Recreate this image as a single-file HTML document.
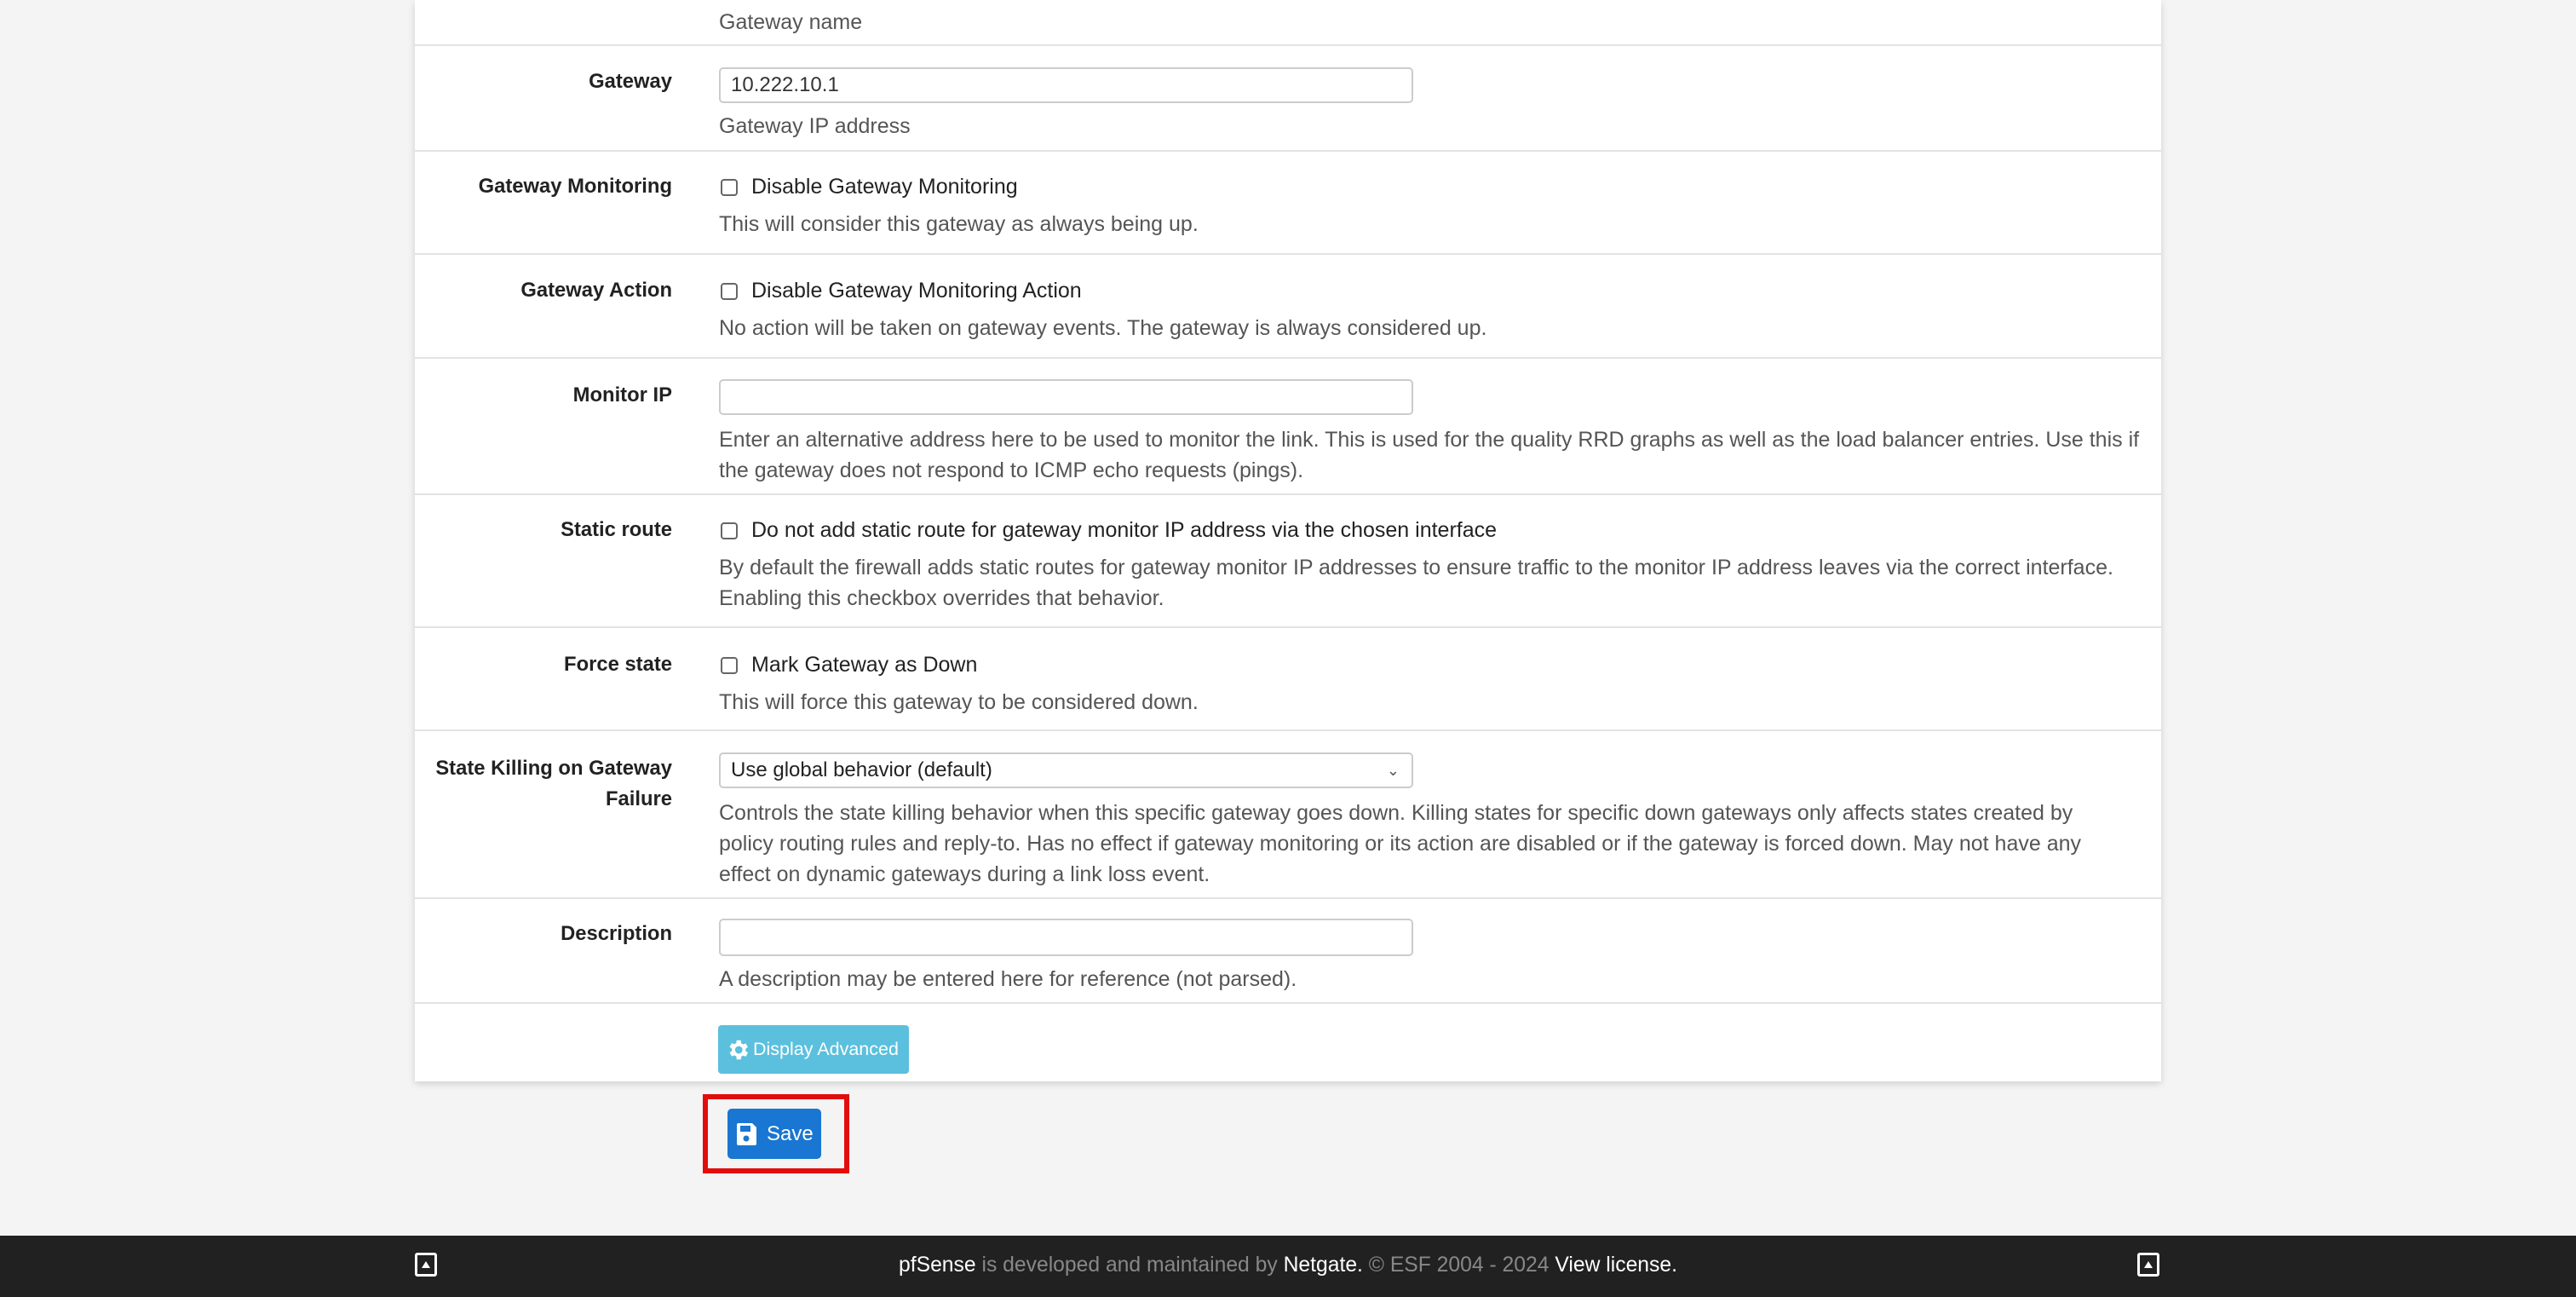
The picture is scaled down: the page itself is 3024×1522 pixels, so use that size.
<!DOCTYPE html>
<html><head><meta charset="utf-8"><style>
*{box-sizing:border-box;margin:0;padding:0}
body{width:3024px;height:1522px;background:#f4f4f4;font-family:"Liberation Sans",sans-serif;position:relative;overflow:hidden;color:#222}
.panel{position:absolute;left:487px;top:0;width:2050px;height:1269px;background:#fff;box-shadow:0 3px 8px rgba(0,0,0,.15)}
.hr{position:absolute;left:487px;width:2050px;height:2px;background:#e3e3e3}
.lbl{position:absolute;right:2235px;font-weight:bold;font-size:23.8px;line-height:36px;text-align:right;white-space:nowrap;color:#222}
.t{position:absolute;left:844px;font-size:25px;line-height:36px;white-space:nowrap;color:#555}
.c{position:absolute;left:846px;width:20px;height:20px;border:2px solid #666;border-radius:4px;background:#fff}
.ct{position:absolute;left:882px;font-size:25px;line-height:36px;white-space:nowrap;color:#222}
.in{position:absolute;left:844px;width:815px;border:2px solid #ccc;border-radius:5px;background:#fff;font-size:24px;padding-left:12px;display:flex;align-items:center;color:#333}
.foot{position:absolute;left:0;top:1450px;width:3024px;height:72px;background:#212121}
.ic{position:absolute;top:1470px;width:26px;height:28px;border:3px solid #fff;border-radius:3px}
.ic:after{content:"";position:absolute;left:5px;top:7px;border-left:5px solid transparent;border-right:5px solid transparent;border-bottom:8px solid #fff}
</style></head><body>
<div class="panel"></div>
<div class="hr" style="top:52px"></div>
<div class="hr" style="top:176px"></div>
<div class="hr" style="top:297px"></div>
<div class="hr" style="top:419px"></div>
<div class="hr" style="top:579px"></div>
<div class="hr" style="top:735px"></div>
<div class="hr" style="top:856px"></div>
<div class="hr" style="top:1053px"></div>
<div class="hr" style="top:1176px"></div>

<div class="t" style="top:8px">Gateway name</div>

<div class="lbl" style="top:78px">Gateway</div>
<div class="in" style="top:79px;height:42px">10.222.10.1</div>
<div class="t" style="top:130px">Gateway IP address</div>

<div class="lbl" style="top:201px">Gateway Monitoring</div>
<div class="c" style="top:210px"></div>
<div class="ct" style="top:201px">Disable Gateway Monitoring</div>
<div class="t" style="top:245px">This will consider this gateway as always being up.</div>

<div class="lbl" style="top:323px">Gateway Action</div>
<div class="c" style="top:332px"></div>
<div class="ct" style="top:323px">Disable Gateway Monitoring Action</div>
<div class="t" style="top:367px">No action will be taken on gateway events. The gateway is always considered up.</div>

<div class="lbl" style="top:446px">Monitor IP</div>
<div class="in" style="top:445px;height:42px"></div>
<div class="t" style="top:498px">Enter an alternative address here to be used to monitor the link. This is used for the quality RRD graphs as well as the load balancer entries. Use this if<br>the gateway does not respond to ICMP echo requests (pings).</div>

<div class="lbl" style="top:604px">Static route</div>
<div class="c" style="top:613px"></div>
<div class="ct" style="top:604px">Do not add static route for gateway monitor IP address via the chosen interface</div>
<div class="t" style="top:648px">By default the firewall adds static routes for gateway monitor IP addresses to ensure traffic to the monitor IP address leaves via the correct interface.<br>Enabling this checkbox overrides that behavior.</div>

<div class="lbl" style="top:762px">Force state</div>
<div class="c" style="top:771px"></div>
<div class="ct" style="top:762px">Mark Gateway as Down</div>
<div class="t" style="top:806px">This will force this gateway to be considered down.</div>

<div class="lbl" style="top:884px">State Killing on Gateway<br>Failure</div>
<div class="in" style="top:883px;height:42px;justify-content:space-between;padding-right:14px;color:#222">Use global behavior (default)<span style="font-size:18px;color:#555">&#8964;</span></div>
<div class="t" style="top:936px">Controls the state killing behavior when this specific gateway goes down. Killing states for specific down gateways only affects states created by<br>policy routing rules and reply-to. Has no effect if gateway monitoring or its action are disabled or if the gateway is forced down. May not have any<br>effect on dynamic gateways during a link loss event.</div>

<div class="lbl" style="top:1078px">Description</div>
<div class="in" style="top:1078px;height:44px"></div>
<div class="t" style="top:1131px">A description may be entered here for reference (not parsed).</div>

<div style="position:absolute;left:843px;top:1203px;width:224px;height:57px;background:#5bc0de;border-radius:4px;color:#fff;font-size:21.5px;display:flex;align-items:center;padding-left:8px">
<svg width="30" height="30" viewBox="0 0 24 24"><path fill="#fff" d="M19.4 13a7.5 7.5 0 000-2l2.1-1.6-2-3.5-2.5 1a7 7 0 00-1.7-1L15 3h-4l-.4 2.7a7 7 0 00-1.7 1l-2.5-1-2 3.5L6.6 11a7.5 7.5 0 000 2l-2.1 1.6 2 3.5 2.5-1a7 7 0 001.7 1L11 21h4l.4-2.7a7 7 0 001.7-1l2.5 1 2-3.5zM13 15.5a3.5 3.5 0 110-7 3.5 3.5 0 010 7z"/></svg>
<span style="margin-left:3px">Display Advanced</span></div>

<div style="position:absolute;left:825px;top:1284px;width:172px;height:93px;border:6px solid #e30c0c"></div>
<div style="position:absolute;left:854px;top:1301px;width:110px;height:59px;background:#1976d2;border-radius:5px;color:#fff;font-size:24px;display:flex;align-items:center;padding-left:10px">
<svg width="26" height="30" viewBox="0 0 26 30"><path fill="#fff" d="M3 2h16l5 5v19a2 2 0 01-2 2H3a2 2 0 01-2-2V4a2 2 0 012-2z"/><rect x="5" y="5" width="12" height="7" fill="#1976d2"/><circle cx="12" cy="20" r="3.5" fill="#1976d2"/></svg>
<span style="margin-left:10px">Save</span></div>

<div class="foot"></div>
<div class="ic" style="left:487px"></div>
<div class="ic" style="left:2509px"></div>
<div style="position:absolute;left:0;width:3024px;top:1467px;line-height:36px;text-align:center;font-size:24.7px;color:#888">
<span style="color:#fff">pfSense</span> is developed and maintained by <span style="color:#fff">Netgate.</span> © ESF 2004 - 2024 <span style="color:#fff">View license.</span></div>
</body></html>
